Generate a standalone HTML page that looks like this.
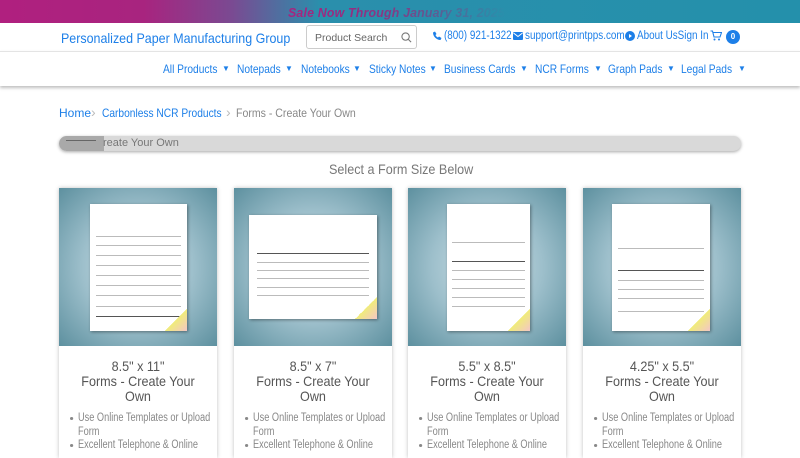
<!DOCTYPE html>
<html><head><meta charset="utf-8"><style>
*{margin:0;padding:0;box-sizing:border-box}
body{width:800px;height:450px;overflow:hidden;background:#fff;font-family:"Liberation Sans",sans-serif;position:relative}
.abs{position:absolute;white-space:nowrap}
.sx{transform:scaleX(.86);transform-origin:0 0}
.banner{left:0;top:0;width:800px;height:23px;background:linear-gradient(90deg,#b0207f 0%,#a8247f 18%,#7a4a92 29%,#2a8fac 40%,#2490ab 100%)}
.banner span{position:absolute;left:288px;top:5px;font-weight:bold;font-style:italic;font-size:13px;letter-spacing:.2px;background:linear-gradient(90deg,#a8237f 0%,#8a3582 45%,#5a5f95 70%,#2a8fac 100%);-webkit-background-clip:text;background-clip:text;color:transparent;transform:scaleX(.95);transform-origin:0 0}
.blue{color:#1d7fe8}
.nav{left:0;top:51px;width:800px;height:35px;border-top:1px solid #e4e4e4;box-shadow:0 2px 3px rgba(0,0,0,.25);background:#fff}
.nav span{position:absolute;top:10px;font-size:12px;color:#1d7fe8;white-space:nowrap;transform:scaleX(.85);transform-origin:0 0}
.nav b{position:absolute;top:12px;font-size:8px;color:#1d7fe8;font-weight:normal}
.card{position:absolute;top:188px;width:158px;height:270px;background:#fff;box-shadow:0 0 4px rgba(0,0,0,.25)}
.img{position:absolute;left:0;top:0;width:158px;height:158px;background:radial-gradient(circle at 50% 50%,#cfe1e7 0%,#9dbfcb 50%,#5d909f 100%)}
.paper{position:absolute;background:#fff;box-shadow:1px 1px 3px rgba(0,0,0,.4);overflow:hidden}
.paper i{position:absolute;left:6%;right:6%;border-top:1px solid #bbb}
.curl{position:absolute;right:0;bottom:0;width:22px;height:22px;background:linear-gradient(135deg,transparent 50%,#f0ec7a 50%,#f3c6c6 100%)}
.t{position:absolute;left:0;width:158px;top:171px;text-align:center;font-size:14px;line-height:15px;color:#555;transform:scaleX(.9)}
.ul{position:absolute;left:11px;top:224px;width:190px;font-size:11.5px;line-height:13.5px;color:#888;transform:scaleX(.8);transform-origin:0 0;white-space:nowrap}
.ul div{position:relative;padding-left:10px}
.ul div.b:before{content:"";position:absolute;left:0;top:5px;width:4px;height:3px;border-radius:50%;background:#888}
</style></head><body>
<div class="abs banner"><span>Sale Now Through January 31, 2025</span></div>
<div class="abs blue sx" style="left:61px;top:30px;font-size:14px;transform:scaleX(.89)">Personalized Paper Manufacturing Group</div>
<div class="abs" style="left:306px;top:25px;width:111px;height:24px;border:1px solid #ccc;border-radius:3px;font-size:10.5px;color:#666;padding:6px 0 0 8px">Product Search
<svg class="abs" style="left:94px;top:6px" width="11" height="11" viewBox="0 0 12 12"><circle cx="5" cy="5" r="4" fill="none" stroke="#777" stroke-width="1.2"/><path d="M8 8l3 3" stroke="#777" stroke-width="1.2"/></svg></div>
<svg class="abs" style="left:432px;top:31px" width="10" height="10" viewBox="0 0 10 10"><path d="M1 1.5l2-1 1.5 2.5-1 1c.5 1.2 1.3 2 2.5 2.5l1-1 2.5 1.5-1 2C4.5 9 1 5.5 1 1.5z" fill="#1d7fe8"/></svg>
<div class="abs blue sx" style="left:444px;top:30px;font-size:11.5px">(800) 921-1322</div>
<svg class="abs" style="left:513px;top:32px" width="10" height="8" viewBox="0 0 10 8"><rect width="10" height="8" rx="1" fill="#1d7fe8"/><path d="M0.5 1l4.5 3.5 4.5-3.5" stroke="#fff" fill="none" stroke-width="1"/></svg>
<div class="abs blue sx" style="left:525px;top:30px;font-size:11.5px">support@printpps.com</div>
<svg class="abs" style="left:625px;top:31px" width="10" height="10" viewBox="0 0 10 10"><circle cx="5" cy="5" r="5" fill="#1d7fe8"/><path d="M4 3v4l3-2z" fill="#fff"/></svg>
<div class="abs blue sx" style="left:637px;top:30px;font-size:11.5px">About UsSign In</div>
<svg class="abs" style="left:710px;top:30px" width="12" height="11" viewBox="0 0 12 11"><path d="M0.5 1h2l1.5 6h6l1.5-4.5H3" fill="none" stroke="#1d7fe8" stroke-width="1.1"/><circle cx="4.5" cy="9.5" r="1" fill="#1d7fe8"/><circle cx="9" cy="9.5" r="1" fill="#1d7fe8"/></svg>
<div class="abs" style="left:726px;top:30px;width:14px;height:14px;border-radius:50%;background:#1d7fe8;color:#fff;font-size:8px;font-weight:bold;text-align:center;line-height:14px">0</div>
<div class="abs nav">
<span style="left:163px">All Products</span><b style="left:222px">▼</b>
<span style="left:237px">Notepads</span><b style="left:285px">▼</b>
<span style="left:301px">Notebooks</span><b style="left:353px">▼</b>
<span style="left:369px">Sticky Notes</span><b style="left:429px">▼</b>
<span style="left:444px">Business Cards</span><b style="left:520px">▼</b>
<span style="left:535px">NCR Forms</span><b style="left:594px">▼</b>
<span style="left:608px">Graph Pads</span><b style="left:667px">▼</b>
<span style="left:681px">Legal Pads</span><b style="left:738px">▼</b>
</div>
<div class="abs blue" style="left:59px;top:106px;font-size:12px">Home</div>
<div class="abs" style="left:91px;top:104px;font-size:14px;color:#bbb">›</div>
<div class="abs blue" style="left:102px;top:106px;font-size:12px;transform:scaleX(.85);transform-origin:0 0">Carbonless NCR Products</div>
<div class="abs" style="left:226px;top:104px;font-size:14px;color:#bbb">›</div>
<div class="abs" style="left:236px;top:106px;font-size:12px;color:#888;transform:scaleX(.88);transform-origin:0 0">Forms - Create Your Own</div>
<div class="abs" style="left:59px;top:136px;width:682px;height:15px;border-radius:8px;background:#d9d9d9;box-shadow:0 1px 3px rgba(0,0,0,.35);overflow:hidden">
<div class="abs" style="left:0;top:0;width:45px;height:15px;background:#a9a9a9;border-radius:8px 0 0 8px"></div>
<div class="abs" style="left:7px;top:4px;width:30px;border-top:1px solid #666"></div>
<div class="abs" style="left:44px;top:1px;font-size:11px;color:#777">reate Your Own</div></div>
<div class="abs" style="left:329px;top:161px;font-size:14px;color:#777;transform:scaleX(.9);transform-origin:0 0">Select a Form Size Below</div>

<div class="card" style="left:59px"><div class="img"><div class="paper" style="left:31px;top:16px;width:97px;height:127px"><i style="top:25%"></i><i style="top:32%"></i><i style="top:40%"></i><i style="top:48%"></i><i style="top:56%"></i><i style="top:64%"></i><i style="top:72%"></i><i style="top:80%"></i><i style="top:88%;border-color:#555"></i><div class="curl"></div></div></div>
<div class="t">8.5" x 11"<br>Forms - Create Your<br>Own</div><div class="ul"><div class="b">Use Online Templates or Upload</div><div>Form</div><div class="b">Excellent Telephone &amp; Online</div></div></div>

<div class="card" style="left:234px"><div class="img"><div class="paper" style="left:15px;top:27px;width:128px;height:104px"><i style="top:37%;border-color:#555"></i><i style="top:45%"></i><i style="top:53%"></i><i style="top:61%"></i><i style="top:69%"></i><i style="top:77%"></i><div class="curl"></div></div></div>
<div class="t">8.5" x 7"<br>Forms - Create Your<br>Own</div><div class="ul"><div class="b">Use Online Templates or Upload</div><div>Form</div><div class="b">Excellent Telephone &amp; Online</div></div></div>

<div class="card" style="left:408px"><div class="img"><div class="paper" style="left:39px;top:16px;width:83px;height:127px"><i style="top:30%"></i><i style="top:45%;border-color:#555"></i><i style="top:52%"></i><i style="top:59%"></i><i style="top:66%"></i><i style="top:73%"></i><i style="top:80%"></i><div class="curl"></div></div></div>
<div class="t">5.5" x 8.5"<br>Forms - Create Your<br>Own</div><div class="ul"><div class="b">Use Online Templates or Upload</div><div>Form</div><div class="b">Excellent Telephone &amp; Online</div></div></div>

<div class="card" style="left:583px"><div class="img"><div class="paper" style="left:29px;top:16px;width:98px;height:127px"><i style="top:35%"></i><i style="top:52%;border-color:#555"></i><i style="top:60%"></i><i style="top:67%"></i><i style="top:74%"></i><i style="top:84%"></i><div class="curl"></div></div></div>
<div class="t">4.25" x 5.5"<br>Forms - Create Your<br>Own</div><div class="ul"><div class="b">Use Online Templates or Upload</div><div>Form</div><div class="b">Excellent Telephone &amp; Online</div></div></div>
</body></html>
